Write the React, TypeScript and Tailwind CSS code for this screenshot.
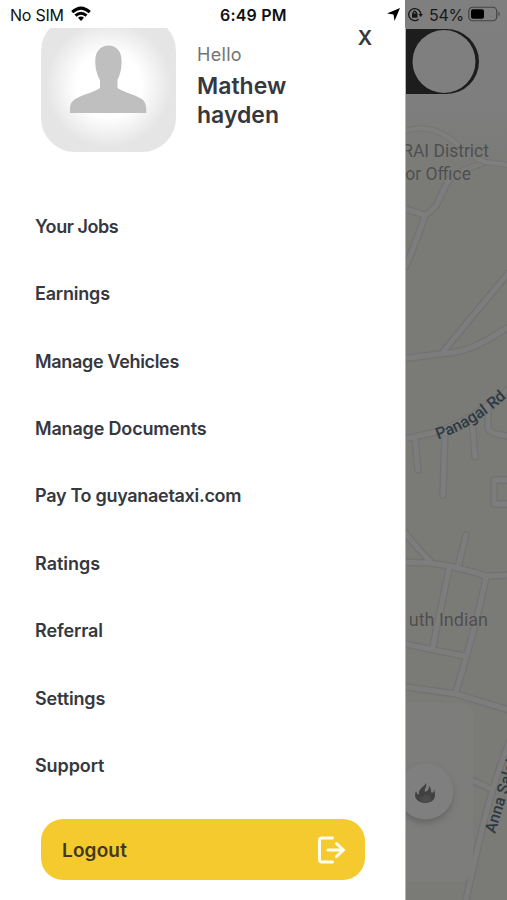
const menuItems = [
  { label: 'Your Jobs', tracking: 'tracking-[-0.45px]' },
  { label: 'Earnings', tracking: 'tracking-[-0.2px]' },
  { label: 'Manage Vehicles', tracking: 'tracking-[-0.33px]' },
  { label: 'Manage Documents', tracking: 'tracking-[-0.17px]' },
  { label: 'Pay To guyanaetaxi.com', tracking: 'tracking-[-0.3px]' },
  { label: 'Ratings', tracking: 'tracking-[0px]' },
  { label: 'Referral', tracking: 'tracking-[-0.1px]' },
  { label: 'Settings', tracking: 'tracking-[-0.15px]' },
  { label: 'Support', tracking: 'tracking-[-0.1px]' },
]

const ringRoad = 'M400 133 C415 126 432 127 446 136 C462 147 470 157 485 162 L510 165'

const roads = [
  'M485 162 C465 170 452 174 447 183 L438 202 Q434 210 425 215 L406 209',
  'M425 215 Q420 232 406 266',
  'M400 359 L440 354 Q465 353 487 340 L512 325',
  'M443 352 L475 313 L512 269',
  'M400 440 L432 433 Q470 423 512 386',
  'M415 438 L418 470',
  'M445 430 L443 495',
  'M472 418 L475 457',
  'M488 407 V428 Q490 435 512 436',
  'M512 480 H494 V504 H512',
  'M400 526 Q412 543 430 561',
  'M466 535 L458 567',
  'M400 562 L430 563 Q455 566 486 576 L512 575',
  'M449 569 L440 612 L433 646',
  'M486 578 Q475 630 456 692',
  'M400 643 L464 656',
  'M400 686 L456 694 L512 711',
  'M474 781 L491 789',
  'M512 735 Q492 785 480 838 L465 904',
]

function MapView() {
  return (
    <svg className="block h-full w-full" viewBox="405 0 102 900" fill="none">
      <defs>
        <path id="panagal" d="M438 439.500 Q476 427 514 391" />
        <linearGradient id="fade" x1="0" y1="0" x2="0" y2="1">
          <stop offset="0" stopColor="#7f7f7f" />
          <stop offset="0.6" stopColor="#7e7e7e" />
          <stop offset="1" stopColor="#7b7b78" stopOpacity="0" />
        </linearGradient>
        <filter id="soft" x="-50%" y="-50%" width="200%" height="200%">
          <feGaussianBlur stdDeviation="3" />
        </filter>
      </defs>
      <rect x="405" width="102" height="900" fill="#7a7a77" />
      {roads.map((d) => (
        <path key={d} d={d} stroke="#727271" strokeWidth="7.500" strokeLinecap="round" strokeLinejoin="round" />
      ))}
      {roads.map((d) => (
        <path key={d} d={d} stroke="#7d7d7d" strokeWidth="5" strokeLinecap="round" strokeLinejoin="round" />
      ))}
      <rect x="405" width="102" height="185" fill="url(#fade)" />
      <path d={ringRoad} stroke="#757574" strokeWidth="6" />
      <path d={ringRoad} stroke="#7f7f7e" strokeWidth="4" />

      {/* online switch */}
      <rect x="340" y="29" width="139" height="65" rx="32.5" fill="#1d1d1e" />
      <circle cx="444" cy="61.5" r="31.500" fill="#7f7f7f" />

      {/* places */}
      <g fontFamily="Roboto, sans-serif" fontSize="17.5" fill="#4f4f4e" stroke="#7d7d7b" strokeWidth="2" paintOrder="stroke">
        <text x="489" y="157" textAnchor="end">RAI District</text>
        <text x="471" y="180" textAnchor="end">or Office</text>
        <text x="488" y="626" textAnchor="end" fontSize="18">uth Indian</text>
      </g>
      <g fontFamily="Roboto, sans-serif" fontWeight="500" fontSize="16" fill="#2e3a43">
        <text>
          <textPath href="#panagal">Panagal Rd</textPath>
        </text>
        <text transform="translate(495 834) rotate(-73)">Anna Salai</text>
      </g>

      {/* bottom panel */}
      <rect x="396" y="703" width="77" height="178" rx="12" fill="#7d7d7c" />
      <circle cx="425" cy="795" r="28" fill="#555" opacity="0.6" filter="url(#soft)" />
      <circle cx="425.500" cy="791.500" r="28" fill="#7f7f7f" />
      <path
        d="M426 783 C427 788 424 788 425 792 C428 791 429 789 429 786 C432 789 430 791 432 793 C434 792 434 791 434 789 C436 795 436 802 426 803 C417 803 413 797 416 791 C417 794 418 795 419 794 C418 789 423 788 426 783Z"
        fill="#414141"
      />
      <path d="M425 794 Q428 797 430 795 Q433 803 425 803 Q418 803 421 796 Q423 799 425 794Z" fill="#4b4b4b" />
      <path d="M405.500 28 V900" stroke="#b4b4b4" />
    </svg>
  )
}

function StatusBar() {
  return (
    <div className="absolute inset-x-0 top-0 flex h-7 items-center font-['Inter',sans-serif] text-[16px] text-[#111]">
      <span className="mt-px ml-[10px] w-[55px] whitespace-nowrap tracking-[-0.25px]">No SIM</span>
      <svg className="ml-[6px] h-4 w-5" viewBox="0 0 20 16" fill="none" stroke="#000" strokeWidth="3">
        <path d="M1.200 6.200 Q10 -2 18.800 6.200" />
        <path d="M4.500 9.700 Q10 4.700 15.500 9.700" />
        <path d="M7 11.700 Q10 9.500 13 11.700 L10 15Z" fill="#000" stroke="none" />
      </svg>
      <span className="mt-px ml-[129px] w-[68px] font-semibold tracking-[0.2px] whitespace-nowrap">6:49 PM</span>
      <svg className="mt-px ml-[99px] h-[13px] w-[13px]" viewBox="0 0 13 13">
        <path d="M13 0 L7.500 13 L6.500 6.500 L0 5.500Z" fill="#000" />
      </svg>
      <svg className="mt-px ml-[8px] h-[15px] w-[15px]" viewBox="0 0 15 15" fill="none" stroke="#161616" strokeWidth="1.300">
        <path d="M10.500 12.200 A6 6 0 1 1 12.700 8" />
        <path d="M10.500 7 L15 7 L12.700 10Z" fill="#161616" stroke="none" />
        <rect x="4" y="6.500" width="5.500" height="4.200" fill="#161616" stroke="none" />
        <path d="M5.200 7 V5.500 Q6.750 3 8.300 5.500 V7" />
      </svg>
      <span className="mt-px ml-[6px] w-[36px] whitespace-nowrap tracking-[-0.3px] text-[#181818]">54%</span>
      <svg className="ml-[3px] h-4 w-[33px]" viewBox="0 0 33 16" fill="none">
        <rect x="0.750" y="1.250" width="28" height="13.500" rx="4" stroke="#444" strokeWidth="1.200" />
        <rect x="3" y="3.300" width="13" height="9.400" rx="2" fill="#000" />
        <path d="M30.500 5.500 Q33 8 30.500 10.500Z" fill="#444" />
      </svg>
    </div>
  )
}

export default function App() {
  return (
    <div className="relative flex h-[900px] w-[507px] overflow-hidden bg-white font-['Inter',sans-serif] text-[#35383e]">
      <aside className="flex w-[405px] shrink-0 flex-col bg-white pt-7">
        {/* profile */}
        <div className="flex h-[164.6px] items-start overflow-hidden pl-[41px]">
          <div className="-mt-[11px] flex h-[135px] w-[135px] shrink-0 rounded-[34px] bg-[radial-gradient(circle,#ffffff_0%,#ffffff_34%,#e5e5e5_66%)]">
            <svg className="h-full w-full" viewBox="41 17 135 135">
              <path
                d="M108.500 45.500 C116 45.500 121.500 51 121.500 60 C122 68 120 75 117.500 80 V88 C125 93 137 95 143 100 C146 103 146.500 107 146.300 113 H70 C69.800 107 70 103 74 100 C80 95 93 93 100 88 V80 C97 75 95 68 95.300 60 C95.500 51 101 45.500 108.500 45.500Z"
                fill="#bfbfbf"
              />
            </svg>
          </div>
          <div className="ml-[21px] w-[140px] pt-[15px]">
            <p className="text-[18px] leading-6 tracking-[0.3px] text-[#747474]">Hello</p>
            <h1 className="mt-[5px] text-[23px] leading-[29px] font-semibold">
              Mathew<br />hayden
            </h1>
          </div>
          <button className="ml-[15px] h-[20px] w-[26px] text-[20px] leading-[20px] font-semibold">X</button>
        </div>

        <nav className="flex flex-col pl-[35px]">
          {menuItems.map((item) => (
            <a key={item.label} className="flex h-[67.4px] items-center text-[18px] font-semibold">
              <span className={item.tracking}>{item.label}</span>
            </a>
          ))}
        </nav>

        <button className="mt-[19.4px] ml-[41px] flex h-[61px] w-[324px] items-center justify-between rounded-[22px] bg-[#f5ca2e] pr-[20px] pl-[21px] text-[19px] font-semibold text-[#41391f]">
          <span className="mt-[4px] tracking-[0.15px]">Logout</span>
          <svg className="mt-px h-7 w-7" viewBox="0 0 28 28" fill="none" stroke="#fffdf0" strokeWidth="3" strokeLinecap="round" strokeLinejoin="round">
            <path d="M15.500 2 H5 Q2.500 2 2.500 4.500 V23.500 Q2.500 26 5 26 H15.500" />
            <path d="M11 14 H26 M19.500 7.500 L26.500 14 L19.500 20.500" />
          </svg>
        </button>
      </aside>
      <div className="w-[102px] shrink-0">
        <MapView />
      </div>
      <StatusBar />
    </div>
  )
}
